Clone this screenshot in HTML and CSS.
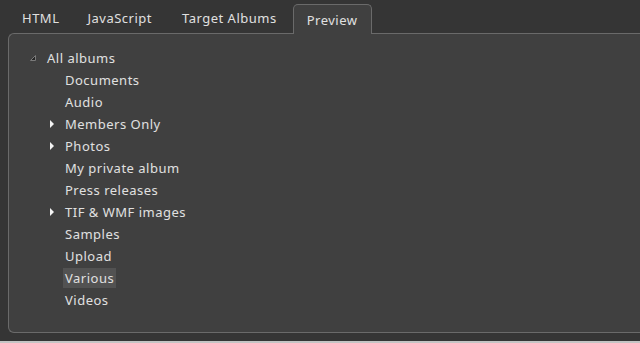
FILE: index.html
```html
<!DOCTYPE html>
<html lang="en">
<head>
    <meta charset="UTF-8">
    <title>Album Preview</title>
    <link rel="stylesheet" href="styles.css">
</head>
<body>
    <div class="tabs">
        <a href="#" class="tab">HTML</a>
        <a href="#" class="tab">JavaScript</a>
        <a href="#" class="tab">Target Albums</a>
        <a href="#" class="tab active">Preview</a>
    </div>

    <section class="panel">
        <ul class="tree">
            <li class="node open">
                <div class="row">
                    <span class="toggle">
                        <svg class="expanded" width="7" height="7" viewBox="0 0 7 7">
                            <polygon points="5.5,0.5 5.5,5.5 0.5,5.5" fill="#262626" stroke="#7a7a7a" stroke-width="1"/>
                        </svg>
                    </span>
                    <span class="label">All albums</span>
                </div>
                <ul class="children">
                    <li class="row"><span class="toggle"></span><span class="label">Documents</span></li>
                    <li class="row"><span class="toggle"></span><span class="label">Audio</span></li>
                    <li class="row"><span class="toggle collapsed"></span><span class="label">Members Only</span></li>
                    <li class="row"><span class="toggle collapsed"></span><span class="label">Photos</span></li>
                    <li class="row"><span class="toggle"></span><span class="label">My private album</span></li>
                    <li class="row"><span class="toggle"></span><span class="label">Press releases</span></li>
                    <li class="row"><span class="toggle collapsed"></span><span class="label">TIF &amp; WMF images</span></li>
                    <li class="row"><span class="toggle"></span><span class="label">Samples</span></li>
                    <li class="row"><span class="toggle"></span><span class="label">Upload</span></li>
                    <li class="row"><span class="toggle"></span><span class="label selected">Various</span></li>
                    <li class="row"><span class="toggle"></span><span class="label">Videos</span></li>
                </ul>
            </li>
        </ul>
    </section>

    <div class="shadow"></div>
</body>
</html>
```

FILE: styles.css
```css
:root {
    --background: #353535;
    --panel: #404040;
    --border: #6a6a6a;
    --text: #e0e0e0;
    --selected: #525252;
}

* {
    margin: 0;
    padding: 0;
    box-sizing: border-box;
}

body {
    background: var(--background);
    color: var(--text);
    font-family: 'Noto Sans', 'Open Sans', sans-serif;
    font-size: 13px;
    letter-spacing: 0.5px;
    width: 640px;
    height: 343px;
    overflow: hidden;
    display: flex;
    flex-direction: column;
}

.tabs {
    display: flex;
    align-items: flex-end;
    padding: 4px 0 0 8px;
    height: 33px;
}

.tab {
    color: var(--text);
    text-decoration: none;
    padding: 0 14px 6px;
    line-height: 18px;
}

.tab:nth-child(3) {
    padding-left: 16px;
}

.tab.active {
    margin-left: 2px;
    padding: 6px 13px 5px;
    height: 30px;
    background: var(--panel);
    border: 1px solid var(--border);
    border-bottom: none;
    border-radius: 5px 5px 0 0;
    position: relative;
    z-index: 1;
    margin-bottom: -1px;
}

.panel {
    margin-left: 8px;
    height: 300px;
    background: var(--panel);
    border: 1px solid var(--border);
    border-right: none;
    border-radius: 6px 0 0 6px;
    padding: 13px 0 0 20px;
}

.tree,
.children {
    list-style: none;
}

.children {
    padding-left: 18px;
}

.row {
    display: flex;
    align-items: center;
    height: 22px;
}

.toggle {
    flex: none;
    width: 14px;
    height: 22px;
    margin-right: 4px;
    position: relative;
}

.toggle .expanded {
    position: absolute;
    left: 1px;
    top: 8px;
}

.toggle.collapsed::before {
    content: '';
    position: absolute;
    left: 3px;
    top: 7px;
    border-left: 4px solid #f4f4f4;
    border-top: 4px solid transparent;
    border-bottom: 4px solid transparent;
}

.label {
    padding: 1px 2px;
    line-height: 18px;
    margin-left: -2px;
}

.label.selected {
    background: var(--selected);
}

.shadow {
    margin-top: 8px;
    flex: 1;
    background: #c4c4c4;
}
```
